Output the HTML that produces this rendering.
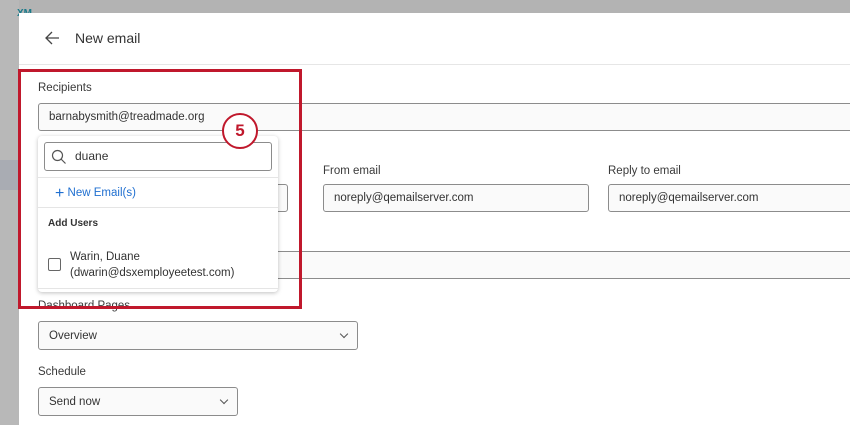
<!DOCTYPE html>
<html><head><style>
body{margin:0;width:850px;height:425px;overflow:hidden;background:#b3b3b3;font-family:"Liberation Sans",sans-serif;position:relative;color:#333}
.a{position:absolute}
.modal{left:19px;top:13px;width:831px;height:412px;background:#fff}
.lbl{font-size:11.5px;color:#3a3a3a}
.inp{border:1px solid #8c8c8c;border-radius:3px;background:#fafafa;box-sizing:border-box;font-size:11.5px;color:#333;padding-left:10px;line-height:26px}
.chev{position:absolute;right:10px;top:9px;width:5px;height:5px;border-right:1px solid #555;border-bottom:1px solid #555;transform:rotate(45deg)}
</style></head><body>
<div class="a" style="left:0;top:0;width:19px;height:425px;background:#b8b8b8"></div>
<div class="a" style="left:17px;top:8px;color:#1a7a8a;font-weight:bold;font-size:10px">XM</div>
<div class="a modal"></div>
<div class="a" style="left:0;top:160px;width:19px;height:30px;background:#a9acb3"></div>
<svg class="a" style="left:44px;top:31px" width="16" height="14"><path d="M15 7H2M8 1L2 7l6 6" fill="none" stroke="#444" stroke-width="1.3"/></svg>
<div class="a" style="left:75px;top:30px;font-size:14px;color:#333">New email</div>
<div class="a" style="left:19px;top:64px;width:831px;height:1px;background:#e6e6e6"></div>
<div class="a lbl" style="left:38px;top:82px">Recipients</div>
<div class="a inp" style="left:38px;top:103px;width:830px;height:28px">barnabysmith@treadmade.org</div>
<div class="a lbl" style="left:323px;top:165px">From email</div>
<div class="a inp" style="left:323px;top:184px;width:266px;height:28px">noreply@qemailserver.com</div>
<div class="a lbl" style="left:608px;top:165px">Reply to email</div>
<div class="a inp" style="left:608px;top:184px;width:260px;height:28px">noreply@qemailserver.com</div>
<div class="a inp" style="left:200px;top:184px;width:88px;height:28px"></div>
<div class="a inp" style="left:38px;top:251px;width:830px;height:28px"></div>
<div class="a lbl" style="left:38px;top:300px">Dashboard Pages</div>
<div class="a inp" style="left:38px;top:321px;width:320px;height:29px;line-height:29px">Overview<span class="chev"></span></div>
<div class="a lbl" style="left:38px;top:366px">Schedule</div>
<div class="a inp" style="left:38px;top:387px;width:200px;height:29px;line-height:29px">Send now<span class="chev"></span></div>
<div class="a" style="left:38px;top:136px;width:240px;height:156px;background:#fff;border-radius:4px;box-shadow:0 1px 4px rgba(0,0,0,.25)"></div>
<div class="a inp" style="left:44px;top:142px;width:228px;height:29px;padding-left:30px;line-height:27px;background:#fff;font-size:12px">duane</div>
<svg class="a" style="left:51px;top:149px" width="16" height="16"><circle cx="6.5" cy="6.5" r="5" fill="none" stroke="#555" stroke-width="1.2"/><path d="M10 10l4.5 4.5" stroke="#555" stroke-width="1.2"/></svg>
<div class="a" style="left:38px;top:177px;width:240px;height:1px;background:#e5e5e5"></div>
<div class="a" style="left:55px;top:183px;color:#1f6fd0;font-size:11.5px"><span style="font-size:16px;position:relative;top:2px">+</span> New Email(s)</div>
<div class="a" style="left:38px;top:207px;width:240px;height:1px;background:#e5e5e5"></div>
<div class="a" style="left:48px;top:218px;font-size:10px;font-weight:bold;color:#333">Add Users</div>
<div class="a" style="left:48px;top:258px;width:11px;height:11px;border:1px solid #666;border-radius:2px"></div>
<div class="a" style="left:70px;top:249px;font-size:11.5px;line-height:16px;color:#333">Warin, Duane<br>(dwarin@dsxemployeetest.com)</div>
<div class="a" style="left:38px;top:288px;width:240px;height:1px;background:#e5e5e5"></div>
<div class="a" style="left:18px;top:69px;width:278px;height:234px;border:3px solid #c0182c"></div>
<div class="a" style="left:222px;top:113px;width:32px;height:32px;border:2.5px solid #c0182c;border-radius:50%;background:#fff;text-align:center;line-height:32px;font-size:17px;font-weight:bold;color:#c0182c">5</div>
</body></html>
